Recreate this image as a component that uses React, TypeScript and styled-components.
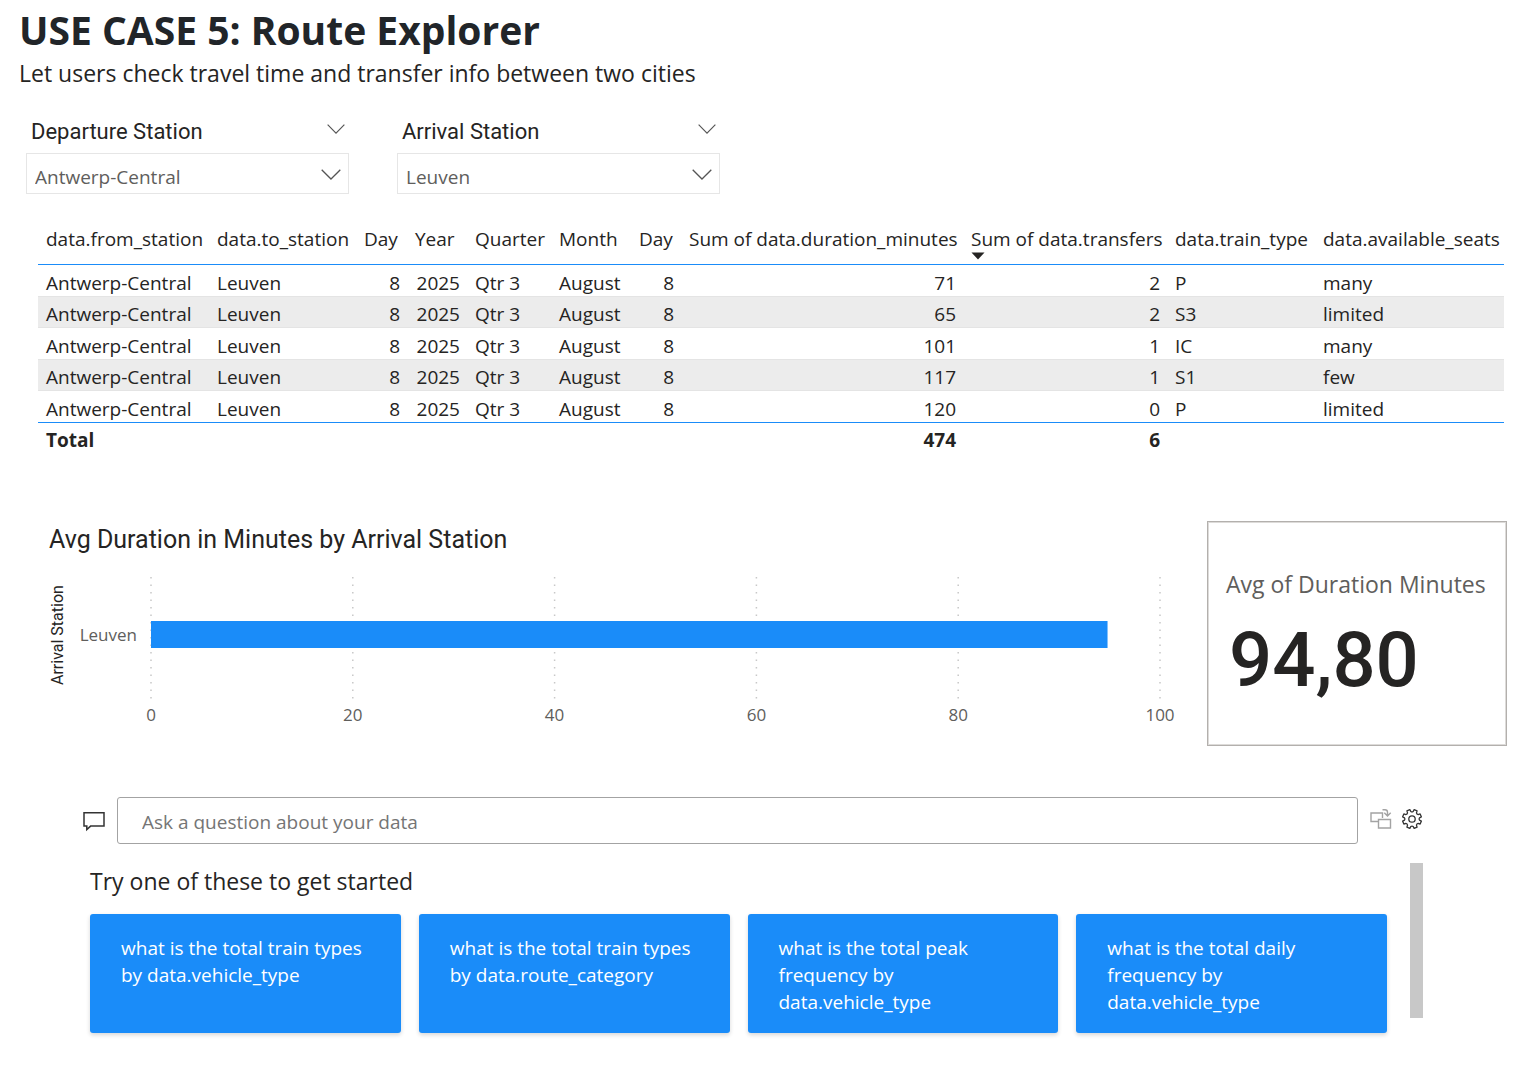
import React from "react";
import styled, { createGlobalStyle } from "styled-components";

const sans = `"Open Sans", "Noto Sans", sans-serif`;
const din = `Roboto, "Open Sans", sans-serif`;
const blue = "#1a8cf9";
const ink = "#252423";
const muted = "#605e5c";

const GlobalStyle = createGlobalStyle`
  *, *::before, *::after { box-sizing: border-box; }
  body { margin: 0; background: #fff; color: ${ink}; font-family: ${sans}; font-size: 19px; }
  h1, h2, p { margin: 0; font-weight: 400; }
  button, input, select { font: inherit; color: inherit; }
`;

const Page = styled.main`
  padding: 3px 16px 35px 19px;
`;

const Title = styled.h1`
  && { font-weight: 700; }
  font-size: 39px;
  line-height: 54px;
  color: #212529;
`;

const Subtitle = styled.p`
  font-size: 23px;
  line-height: 32px;
`;

const Slicers = styled.section`
  display: flex;
  gap: 48px;
  margin: 26px 0 0 7px;
`;

const Slicer = styled.div`
  flex: 0 1 323px;
`;

const SlicerHeader = styled.div`
  display: flex;
  justify-content: space-between;
  height: 38px;
  padding: 0 4px 0 5px;
`;

const SlicerLabel = styled.label`
  font-family: ${din};
  font-size: 22px;
  line-height: 33px;
`;

const BareButton = styled.button`
  display: flex;
  align-items: center;
  padding: 0;
  border: 0;
  background: none;
`;

const HeaderToggle = styled(BareButton)`
  height: 27px;
`;

const SelectWrap = styled.div`
  position: relative;
`;

const Select = styled.select`
  appearance: none;
  display: block;
  width: 100%;
  height: 41px;
  padding: 6px 36px 0 8px;
  border: 1px solid #e6e6e6;
  border-radius: 0;
  background: #fff;
  color: ${muted};
`;

const SelectArrow = styled.span`
  position: absolute;
  right: 8px;
  top: 16px;
  display: flex;
  pointer-events: none;
`;

const TableWrap = styled.section`
  margin: 21px 3px 0 19px;
`;

const Table = styled.table`
  width: 100%;
  table-layout: fixed;
  border-collapse: separate;
  border-spacing: 0;
  white-space: nowrap;
  line-height: 26px;
`;

const Th = styled.th`
  height: 50px;
  padding: 11px 0 0 8px;
  border-bottom: 1px solid ${blue};
  font-weight: 400;
  text-align: left;
  vertical-align: top;
`;

const SortArrow = styled.svg`
  display: block;
`;

const Td = styled.td<{ $right?: boolean }>`
  padding: 4px 7px 0 8px;
  text-align: ${(p) => (p.$right ? "right" : "left")};
`;

const Row = styled.tr`
  height: 32px;
  & > td { border-bottom: 1px solid #e4e4e4; }
  &:nth-child(even) {
    height: 31px;
    background: #ececec;
  }
  &:last-child > td { border-bottom-color: ${blue}; }
`;

const TotalRow = styled.tr`
  height: 31px;
  font-weight: 700;
  & > td { padding-top: 3px; }
`;

const Insights = styled.section`
  display: flex;
  gap: 47px;
  margin-top: 67px;
`;

const Chart = styled.figure`
  flex: 1;
  min-width: 0;
  margin: 0 0 0 30px;
`;

const ChartTitle = styled.h2`
  padding-top: 2px;
  font-family: ${din};
  font-size: 25px;
  line-height: 33px;
`;

const ChartBody = styled.div`
  display: flex;
  margin-top: 20px;
`;

const AxisTitle = styled.span`
  height: 118px;
  width: 18px;
  writing-mode: vertical-rl;
  rotate: 180deg;
  text-align: center;
  font-family: ${din};
  font-size: 16px;
  line-height: 18px;
`;

const Category = styled.span`
  width: 70px;
  margin-right: 14px;
  text-align: right;
  font-size: 17px;
  line-height: 118px;
  color: ${muted};
`;

const Plot = styled.svg`
  flex: 1;
  min-width: 0;
  height: 150px;
  overflow: visible;
  font-size: 17px;
`;

const Card = styled.article`
  flex: 0 0 300px;
  height: 225px;
  padding: 46px 18px 0;
  border: 1px solid #b3b0ad;
  box-shadow: inset 0 0 0 1px #dddbd9;
`;

const CardTitle = styled.h2`
  font-size: 23px;
  line-height: 32px;
  white-space: nowrap;
  color: ${muted};
`;

const CardValue = styled.p`
  padding: 12px 3px;
  font-family: ${din};
  font-size: 76px;
  line-height: 96px;
  && { font-weight: 500; }
`;

const Explore = styled.section`
  margin: 51px 84px 0 64px;
`;

const AskRow = styled.form`
  display: flex;
  align-items: center;
  gap: 12px;
`;

const AskInput = styled.input`
  flex: 1;
  min-width: 0;
  height: 47px;
  padding: 2px 24px 0;
  border: 1px solid #a3a3a3;
  border-radius: 3px;
  &::placeholder { color: #757575; opacity: 1; }
`;

const AskActions = styled.div`
  display: flex;
  gap: 9px;
  padding-bottom: 4px;
`;

const Suggestions = styled.div`
  display: flex;
  gap: 23px;
  margin: 19px 0 0 7px;
`;

const SuggestionBody = styled.div`
  flex: 1;
`;

const SuggestionTitle = styled.h2`
  font-size: 23px;
  line-height: 37px;
`;

const SuggestionGrid = styled.div`
  display: grid;
  grid-template-columns: repeat(4, 1fr);
  gap: 18px;
  margin-top: 14px;
`;

const Suggestion = styled.button`
  display: flex;
  align-items: flex-start;
  min-height: 119px;
  padding: 21px 31px 17px;
  border: 0;
  border-radius: 3px;
  background: ${blue};
  box-shadow: 0 2px 4px rgba(0, 0, 0, 0.16);
  color: #fff;
  line-height: 27px;
  text-align: left;
`;

const ScrollThumb = styled.div`
  width: 13px;
  height: 155px;
  background: #c8c8c8;
`;

const Chevron = ({ width }: { width: number }) => (
  <svg width={width} height={width / 2 + 1} viewBox="0 0 20 11" fill="none" stroke="#555" strokeWidth="1.3" aria-hidden="true">
    <path d="M.7.7 10 10 19.3.7" />
  </svg>
);

const ChatIcon = () => (
  <svg width="22" height="22" viewBox="0 0 22 22" fill="none" stroke="#333" strokeWidth="1.5" aria-hidden="true">
    <path d="M1 2.700h20v13.400H7.600L3.800 19.600v-3.500H1z" />
  </svg>
);

const SwapIcon = () => (
  <svg width="22" height="22" viewBox="0 0 22 22" fill="none" stroke="#a3a3a3" strokeWidth="1.4" aria-hidden="true">
    <path d="M8 13.500H1V5h11.500v5M8.500 11.500h12v8.500h-12zM12.500 1.700H15q2.500 0 2.500 2.500v3.500M14.300 4.800l3.200 3.200 3.200-3.200" />
  </svg>
);

const teeth = 8;
const gearPath =
  Array.from({ length: teeth }, (_, i) => {
    const at = (deg: number, r: number) => {
      const a = ((i * 360) / teeth + deg) * (Math.PI / 180);
      return `${(11 + r * Math.sin(a)).toFixed(2)} ${(11 - r * Math.cos(a)).toFixed(2)}`;
    };
    return `${i ? "L" : "M"}${at(-13, 9.6)}L${at(-9, 7.6)}Q${at(0, 6.6)} ${at(9, 7.6)}L${at(13, 9.6)}`;
  }).join("") + "z";

const GearIcon = () => (
  <svg width="22" height="22" viewBox="0 0 22 22" fill="none" stroke="#333" strokeWidth="1.3" strokeLinejoin="round" aria-hidden="true">
    <path d={gearPath} />
    <circle cx="11" cy="11" r="3.2" />
  </svg>
);

const slicers = [
  { id: "departure", label: "Departure Station", value: "Antwerp-Central" },
  { id: "arrival", label: "Arrival Station", value: "Leuven" },
];

type Column = { name: string; width: number; right?: boolean; sorted?: boolean };

const columns: Column[] = [
  { name: "data.from_station", width: 171 },
  { name: "data.to_station", width: 147 },
  { name: "Day", width: 51, right: true },
  { name: "Year", width: 60, right: true },
  { name: "Quarter", width: 84 },
  { name: "Month", width: 80 },
  { name: "Day", width: 50, right: true },
  { name: "Sum of data.duration_minutes", width: 282, right: true },
  { name: "Sum of data.transfers", width: 204, right: true, sorted: true },
  { name: "data.train_type", width: 148 },
  { name: "data.available_seats", width: 189 },
];

const trips: [number, number, string, string][] = [
  [71, 2, "P", "many"],
  [65, 2, "S3", "limited"],
  [101, 1, "IC", "many"],
  [117, 1, "S1", "few"],
  [120, 0, "P", "limited"],
];

const rows = trips.map((t) => ["Antwerp-Central", "Leuven", 8, 2025, "Qtr 3", "August", 8, ...t]);
const totals = ["Total", "", "", "", "", "", "", 474, 6, "", ""];

const suggestions = [
  "what is the total train types by data.vehicle_type",
  "what is the total train types by data.route_category",
  "what is the total peak frequency by data.vehicle_type",
  "what is the total daily frequency by data.vehicle_type",
];

export default function App() {
  return (
    <Page>
      <GlobalStyle />
      <Title>USE CASE 5: Route Explorer</Title>
      <Subtitle>Let users check travel time and transfer info between two cities</Subtitle>

      <Slicers>
        {slicers.map((s) => (
          <Slicer key={s.id}>
            <SlicerHeader>
              <SlicerLabel htmlFor={s.id}>{s.label}</SlicerLabel>
              <HeaderToggle type="button" aria-label={`Collapse ${s.label}`}>
                <Chevron width={18} />
              </HeaderToggle>
            </SlicerHeader>
            <SelectWrap>
              <Select id={s.id} defaultValue={s.value}>
                <option>{s.value}</option>
              </Select>
              <SelectArrow>
                <Chevron width={20} />
              </SelectArrow>
            </SelectWrap>
          </Slicer>
        ))}
      </Slicers>

      <TableWrap>
        <Table>
          <colgroup>
            {columns.map((c, i) => (
              <col key={i} width={c.width} />
            ))}
          </colgroup>
          <thead>
            <tr>
              {columns.map((c, i) => (
                <Th key={i} scope="col" aria-sort={c.sorted ? "descending" : undefined}>
                  {c.name}
                  {c.sorted && (
                    <SortArrow width="14" height="8" viewBox="0 0 14 8" aria-hidden="true">
                      <path d="M.5.500h13L7 7.500z" fill={ink} />
                    </SortArrow>
                  )}
                </Th>
              ))}
            </tr>
          </thead>
          <tbody>
            {rows.map((row, r) => (
              <Row key={r}>
                {row.map((cell, i) => (
                  <Td key={i} $right={columns[i].right}>{cell}</Td>
                ))}
              </Row>
            ))}
          </tbody>
          <tfoot>
            <TotalRow>
              {totals.map((cell, i) => (
                <Td key={i} $right={columns[i].right}>{cell}</Td>
              ))}
            </TotalRow>
          </tfoot>
        </Table>
      </TableWrap>

      <Insights>
        <Chart>
          <ChartTitle>Avg Duration in Minutes by Arrival Station</ChartTitle>
          <ChartBody>
            <AxisTitle>Arrival Station</AxisTitle>
            <Category>Leuven</Category>
            <Plot role="img" aria-label="Leuven: 94.8 minutes">
              {[0, 20, 40, 60, 80, 100].map((v) => (
                <React.Fragment key={v}>
                  <line x1={`${v}%`} x2={`${v}%`} y1="1" y2="123" stroke="#c8c8c8" strokeWidth="1.5" strokeDasharray="1.5 6" />
                  <text x={`${v}%`} y="145" textAnchor="middle" fill={muted}>{v}</text>
                </React.Fragment>
              ))}
              <rect x="0" y="45" width="94.8%" height="27" fill={blue} />
            </Plot>
          </ChartBody>
        </Chart>
        <Card>
          <CardTitle>Avg of Duration Minutes</CardTitle>
          <CardValue>94,80</CardValue>
        </Card>
      </Insights>

      <Explore>
        <AskRow>
          <ChatIcon />
          <AskInput type="text" aria-label="Ask a question about your data" placeholder="Ask a question about your data" />
          <AskActions>
            <BareButton type="button" aria-label="Turn this result into a visual">
              <SwapIcon />
            </BareButton>
            <BareButton type="button" aria-label="Settings">
              <GearIcon />
            </BareButton>
          </AskActions>
        </AskRow>
        <Suggestions>
          <SuggestionBody>
            <SuggestionTitle>Try one of these to get started</SuggestionTitle>
            <SuggestionGrid>
              {suggestions.map((s) => (
                <Suggestion key={s} type="button">{s}</Suggestion>
              ))}
            </SuggestionGrid>
          </SuggestionBody>
          <ScrollThumb />
        </Suggestions>
      </Explore>
    </Page>
  );
}
